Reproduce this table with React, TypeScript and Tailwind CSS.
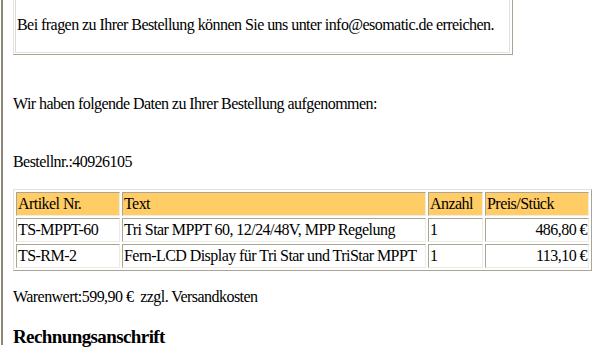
import React from "react";

const cellBorder =
  "border border-t-[#a8a496] border-l-[#a8a496] border-b-[#ecebe4] border-r-[#ecebe4] p-[1px] leading-[20px] align-middle";

export default function App() {
  const rows = [
    { nr: "TS-MPPT-60", text: "Tri Star MPPT 60, 12/24/48V, MPP Regelung", qty: "1", price: "486,80 €" },
    { nr: "TS-RM-2", text: "Fern-LCD Display für Tri Star und TriStar MPPT", qty: "1", price: "113,10 €" },
  ];
  return (
    <div
      className="relative w-[605px] h-[355px] overflow-hidden bg-white text-black text-[16px] tracking-[-0.55px]"
      style={{ fontFamily: '"Liberation Serif", "Times New Roman", serif' }}
    >
      <div className="ml-[1px] h-full border-l-2 border-[#8b8676] pl-[10px]">
        {/* contact box */}
        <div className="-mt-[10px] w-[500px] border border-t-[#e4e2d8] border-l-[#e4e2d8] border-b-[#a8a496] border-r-[#a8a496] pl-[1px] pb-[1px] pr-[2px] pt-[1px]">
          <div className="border border-t-[#a8a496] border-l-[#dcdad0] border-b-[#e4e2d8] border-r-[#e4e2d8] pl-[1px] pt-[23px] pb-[18px] leading-[18px] whitespace-nowrap">
            Bei fragen zu Ihrer Bestellung können Sie uns unter info@esomatic.de erreichen.
          </div>
        </div>

        <p className="mt-[40px] leading-[18px]">Wir haben folgende Daten zu Ihrer Bestellung aufgenommen:</p>

        <p className="mt-[40px] leading-[18px]">Bestellnr.:40926105</p>

        <table className="mt-[18px] w-[578px] table-fixed border-separate border-spacing-[2px] border border-t-[#e4e2d8] border-l-[#e4e2d8] border-b-[#a8a496] border-r-[#a8a496]">
          <colgroup>
            <col className="w-[104px]" />
            <col className="w-[304px]" />
            <col className="w-[55px]" />
            <col className="w-[104px]" />
          </colgroup>
          <thead>
            <tr className="bg-[#ffcc66]">
              <th className={`${cellBorder} text-left font-normal`}>Artikel Nr.</th>
              <th className={`${cellBorder} text-left font-normal`}>Text</th>
              <th className={`${cellBorder} text-left font-normal`}>Anzahl</th>
              <th className={`${cellBorder} text-left font-normal`}>Preis/Stück</th>
            </tr>
          </thead>
          <tbody>
            {rows.map((r) => (
              <tr key={r.nr}>
                <td className={`${cellBorder} whitespace-nowrap`}>{r.nr}</td>
                <td className={`${cellBorder} whitespace-nowrap`}>{r.text}</td>
                <td className={`${cellBorder}`}>{r.qty}</td>
                <td className={`${cellBorder} text-right`}>{r.price}</td>
              </tr>
            ))}
          </tbody>
        </table>

        <p className="mt-[17px] leading-[18px]">Warenwert:599,90 €&nbsp; zzgl. Versandkosten</p>

        <h3 className="mt-[20px] text-[19px] font-bold leading-[22px] tracking-[-0.6px]">Rechnungsanschrift</h3>
      </div>
    </div>
  );
}
